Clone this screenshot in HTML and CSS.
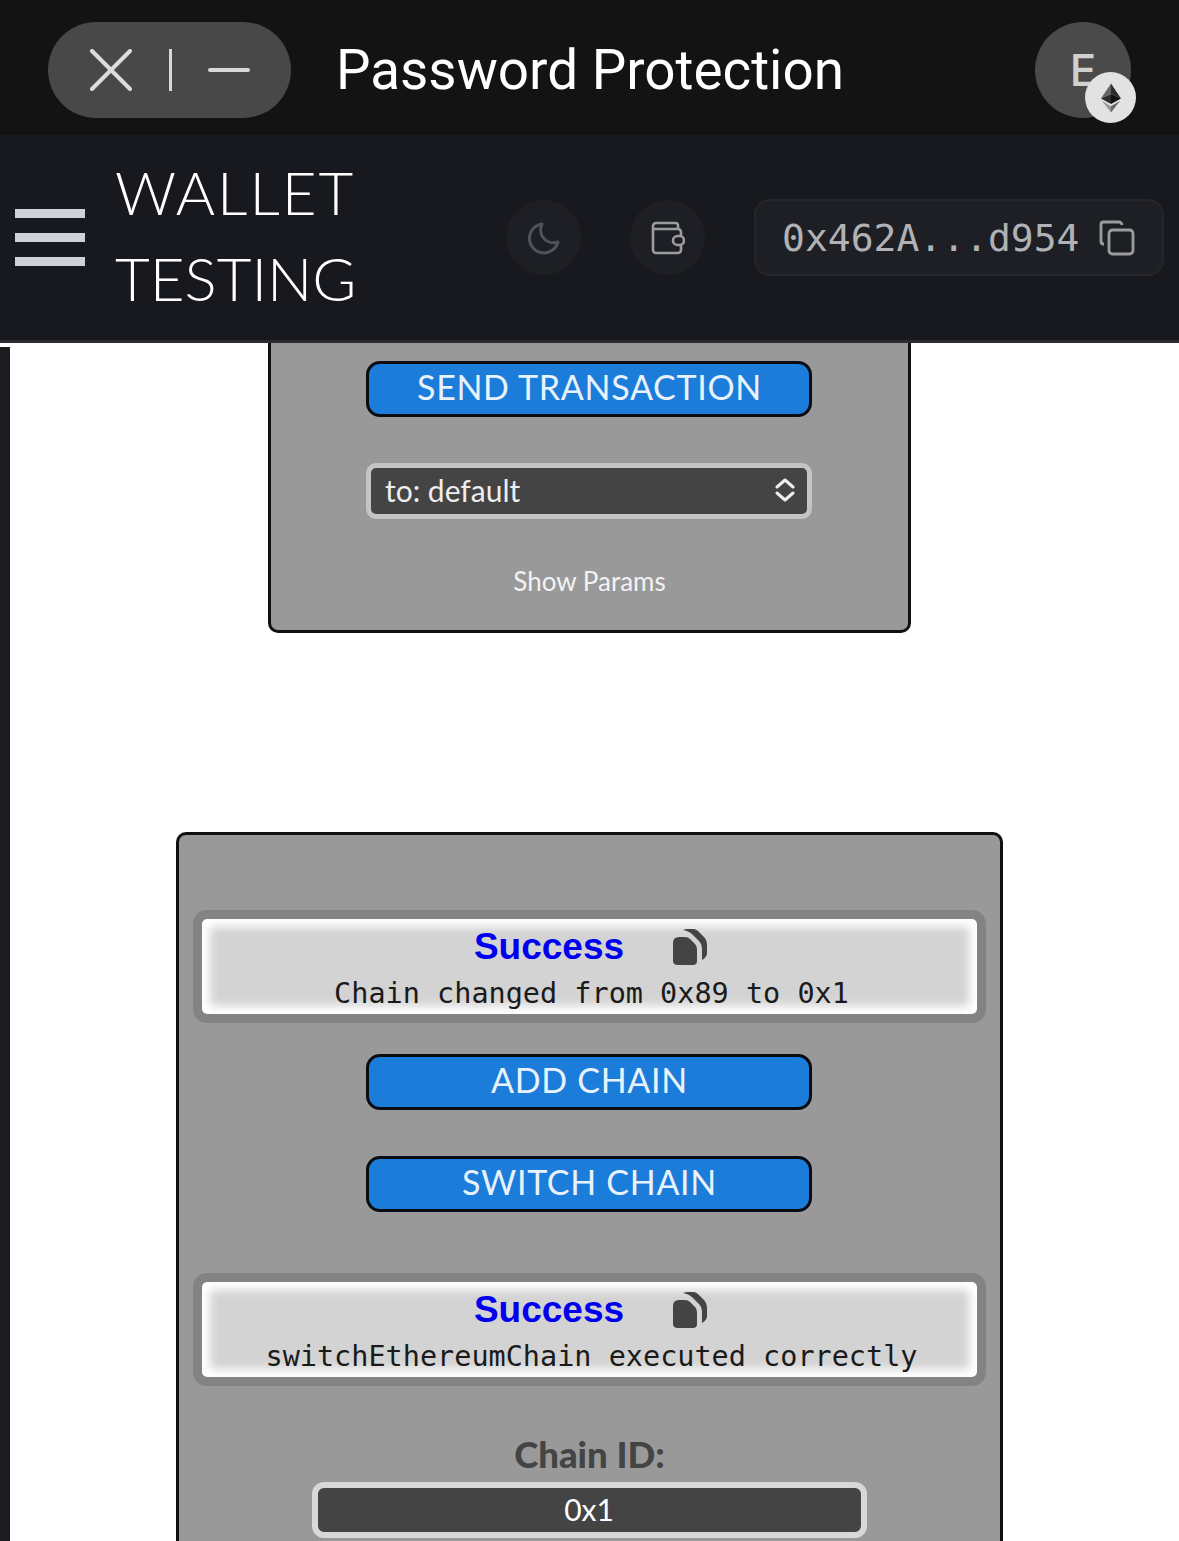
FILE: index.html
```html
<!DOCTYPE html>
<html lang="en">
<head>
    <meta charset="UTF-8">
    <meta name="viewport" content="width=device-width, initial-scale=1.0">
    <title>Password Protection</title>
    <link rel="stylesheet" href="styles.css">
</head>
<body>
    <header class="topbar">
        <div class="window-controls">
            <svg class="control-icon" width="42" height="42" viewBox="0 0 42 42"><path d="M2 2 L40 40 M40 2 L2 40" stroke="#dcdcdc" stroke-width="4" stroke-linecap="round"/></svg>
            <span class="control-divider"></span>
            <span class="control-minus"></span>
        </div>
        <h1 class="topbar-title">Password Protection</h1>
        <div class="avatar">
            <span class="avatar-letter">E</span>
            <span class="avatar-badge">
                <svg width="20" height="30" viewBox="0 0 22 32">
                    <path d="M11 0 L0 16.5 L11 11.5 Z" fill="#666"/>
                    <path d="M11 0 L22 16.5 L11 11.5 Z" fill="#2c2c2c"/>
                    <path d="M0 16.5 L11 11.5 L11 22.5 Z" fill="#2c2c2c"/>
                    <path d="M22 16.5 L11 11.5 L11 22.5 Z" fill="#111"/>
                    <path d="M1 19 L11 25 L11 32 Z" fill="#999"/>
                    <path d="M21 19 L11 25 L11 32 Z" fill="#666"/>
                </svg>
            </span>
        </div>
    </header>

    <nav class="navbar">
        <div class="hamburger"><span></span><span></span><span></span></div>
        <div class="brand"><span class="brand-first">WALLET</span><br>TESTING</div>
        <div class="nav-actions">
            <button class="round-button">
                <svg width="34" height="34" viewBox="0 0 34 34" fill="none"><path d="M15 3 A14.5 14.5 0 1 0 31 21 A13 13 0 0 1 15 3 Z" stroke="#4e535c" stroke-width="3" stroke-linejoin="round"/></svg>
            </button>
            <button class="round-button">
                <svg width="34" height="34" viewBox="0 0 34 34" fill="none" stroke="#9a9ca0" stroke-width="2.6"><path d="M27 7 V4.5 A2.5 2.5 0 0 0 24.5 2 H5 A3 3 0 0 0 2 5 V29 A3 3 0 0 0 5 32 H27 A3 3 0 0 0 30 29 V24"/><path d="M2 8 H27 A3 3 0 0 1 30 11 V15"/><rect x="22" y="15" width="11" height="9" rx="4.5"/></svg>
            </button>
            <div class="address">
                <span class="address-text">0x462A...d954</span>
                <svg width="36" height="36" viewBox="0 0 36 36" fill="none" stroke="#9a9ca0" stroke-width="2.8"><rect x="10" y="10" width="24" height="24" rx="3.5"/><path d="M5 24 H4.5 A2.5 2.5 0 0 1 2 21.5 V4.5 A2.5 2.5 0 0 1 4.5 2 H20 A3 3 0 0 1 23 5"/></svg>
            </div>
        </div>
    </nav>

    <main class="content">
        <div class="edge"></div>

        <section class="card card-send">
            <button class="action-button">SEND TRANSACTION</button>
            <div class="select-box">
                <span>to: default</span>
                <svg width="20" height="24" viewBox="0 0 20 24" fill="none"><path d="M2 9 L10 2 L18 9 M2 15 L10 22 L18 15" stroke="#eee" stroke-width="3" stroke-linecap="round" stroke-linejoin="round"/></svg>
            </div>
            <div class="show-params">Show Params</div>
        </section>

        <section class="card card-chain">
            <div class="result">
                <div class="result-head">
                    <span class="result-title">Success</span>
                    <svg width="36" height="38" viewBox="0 0 36 38"><path d="M7 9 H13 Q16 9 18 11 L23 16 Q25 18 25 21 V33 Q25 37 21 37 H6 Q1 37 1 33 V15 Q1 9 7 9 Z" fill="#444"/><path d="M11 2 Q13 1 16 1 H21 Q24 1 26 3 L32 9 Q35 12 35 16 V25 Q35 29 30 32 V20 Q30 16 27 13 L21 7 Q17 3 11 2 Z" fill="#444"/></svg>
                </div>
                <div class="result-text">Chain changed from 0x89 to 0x1</div>
            </div>
            <button class="action-button">ADD CHAIN</button>
            <button class="action-button action-switch">SWITCH CHAIN</button>
            <div class="result result-second">
                <div class="result-head">
                    <span class="result-title">Success</span>
                    <svg width="36" height="38" viewBox="0 0 36 38"><path d="M7 9 H13 Q16 9 18 11 L23 16 Q25 18 25 21 V33 Q25 37 21 37 H6 Q1 37 1 33 V15 Q1 9 7 9 Z" fill="#444"/><path d="M11 2 Q13 1 16 1 H21 Q24 1 26 3 L32 9 Q35 12 35 16 V25 Q35 29 30 32 V20 Q30 16 27 13 L21 7 Q17 3 11 2 Z" fill="#444"/></svg>
                </div>
                <div class="result-text">switchEthereumChain executed correctly</div>
            </div>
            <div class="chain-label">Chain ID:</div>
            <div class="chain-value">0x1</div>
        </section>
    </main>
</body>
</html>
```

FILE: styles.css
```css
* {
    box-sizing: border-box;
}

html, body {
    height: 100%;
}

body {
    display: flex;
    flex-direction: column;
    margin: 0;
    background-color: white;
    font-family: Lato, "Noto Sans", sans-serif;
    overflow: hidden;
}

.topbar {
    display: flex;
    flex-shrink: 0;
    align-items: center;
    height: 135px;
    padding: 5px 48px 0;
    background-color: #131314;
    color: white;
}

.window-controls {
    display: flex;
    align-items: center;
    width: 243px;
    height: 96px;
    padding-left: 42px;
    border-radius: 48px;
    background-color: #484848;
}

.control-divider {
    width: 3px;
    height: 42px;
    margin-left: 37px;
    background-color: #d8d8d8;
}

.control-minus {
    width: 42px;
    height: 4px;
    margin-left: 36px;
    border-radius: 2px;
    background-color: #d8d8d8;
}

.topbar-title {
    margin: 0 0 0 45px;
    font-family: Roboto, sans-serif;
    font-size: 54.8px;
    font-weight: 400;
}

.avatar {
    position: relative;
    display: flex;
    align-items: center;
    justify-content: center;
    width: 96px;
    height: 96px;
    margin-left: auto;
    border-radius: 50%;
    background-color: #4a4a4a;
}

.avatar-letter {
    font-family: Inter, sans-serif;
    font-size: 44px;
    font-weight: 500;
    color: #d0d0d0;
}

.avatar-badge {
    position: absolute;
    left: 50px;
    top: 50px;
    display: flex;
    align-items: center;
    justify-content: center;
    width: 51px;
    height: 51px;
    border-radius: 50%;
    background-color: #e2e2e2;
}

.navbar {
    display: flex;
    flex-shrink: 0;
    align-items: center;
    height: 208px;
    padding: 0 15px 0 15px;
    background-color: #18191e;
    border-bottom: 3px solid #2b2b2f;
}

.hamburger {
    display: flex;
    flex-direction: column;
    gap: 15px;
    width: 70px;
}

.hamburger span {
    height: 9px;
    background-color: #d0d0d8;
}

.brand {
    margin: -6px 0 0 30px;
    font-size: 60px;
    font-weight: 300;
    line-height: 86px;
    color: white;
}

.brand-first {
    letter-spacing: 2px;
}

.nav-actions {
    display: flex;
    align-items: center;
    gap: 49px;
    margin-left: auto;
}

.round-button {
    display: flex;
    align-items: center;
    justify-content: center;
    width: 75px;
    height: 75px;
    padding: 0;
    border: none;
    border-radius: 50%;
    background-color: #1e1f24;
}

.address {
    display: flex;
    align-items: center;
    gap: 20px;
    width: 410px;
    height: 77px;
    padding-left: 26px;
    border: 2px solid #25262b;
    border-radius: 16px;
    background-color: #1e1f24;
}

.address-text {
    font-family: "DejaVu Sans Mono", monospace;
    font-size: 38px;
    color: #b0b2b6;
}

.content {
    position: relative;
    display: flex;
    flex: 1;
    flex-direction: column;
    align-items: center;
    min-height: 0;
    overflow: hidden;
}

.edge {
    position: absolute;
    left: 0;
    top: 4px;
    bottom: 0;
    width: 10px;
    background-color: #1c1c20;
}

.card {
    display: flex;
    flex-shrink: 0;
    flex-direction: column;
    align-items: center;
    background-color: #999999;
    border: 3px solid #111;
    border-radius: 10px;
}

.card-send {
    width: 643px;
    height: 290px;
    padding-top: 18px;
    border-top: none;
    border-radius: 0 0 10px 10px;
}

.card-chain {
    width: 827px;
    margin-top: 199px;
    padding: 75px 14px 60px;
}

.action-button {
    flex-shrink: 0;
    width: 446px;
    height: 56px;
    margin-right: 1px;
    padding: 0 0 6px 1px;
    border: 3px solid #0b0b12;
    border-radius: 14px;
    background-color: #1c7cd9;
    font-family: Lato, sans-serif;
    font-size: 34px;
    font-weight: 400;
    letter-spacing: 0.7px;
    color: #e8f2fc;
}

.card-chain .action-button {
    margin-top: 31px;
}

.card-chain .action-switch {
    margin-top: 46px;
}

.select-box {
    display: flex;
    align-items: center;
    justify-content: space-between;
    width: 446px;
    height: 56px;
    margin-top: 46px;
    margin-right: 1px;
    padding: 0 12px 2px 14px;
    border: 5px solid #c4c4c4;
    border-radius: 10px;
    background-color: #444;
    font-size: 30px;
    color: #eeeeee;
}

.show-params {
    margin-top: 46px;
    font-size: 26px;
    font-weight: 400;
    color: #f2f2f2;
}

.result {
    flex-shrink: 0;
    width: 100%;
    height: 113px;
    padding-top: 8px;
    border: 9px solid #838383;
    border-radius: 14px;
    background-color: #d3d3d3;
    box-shadow: inset 0 0 10px 8px white;
}

.result-second {
    margin-top: 61px;
}

.result-head {
    display: flex;
    align-items: center;
    justify-content: center;
    gap: 48px;
    height: 40px;
    padding-left: 3px;
}

.result-title {
    font-family: "Liberation Sans", sans-serif;
    font-size: 37px;
    font-weight: bold;
    color: #0000ee;
}

.result-text {
    margin-top: 9px;
    padding-left: 4px;
    font-family: "DejaVu Sans Mono", monospace;
    font-size: 28.5px;
    line-height: 36px;
    text-align: center;
    color: #1a1a1a;
}

.chain-label {
    margin-top: 46px;
    font-size: 36.5px;
    font-weight: 900;
    line-height: 44px;
    color: #444;
}

.chain-value {
    flex-shrink: 0;
    width: 555px;
    height: 56px;
    margin-top: 6px;
    margin-right: 1px;
    border: 6px solid #d8d8d8;
    border-radius: 12px;
    background-color: #444;
    font-size: 30px;
    line-height: 42px;
    text-align: center;
    color: white;
}
```
